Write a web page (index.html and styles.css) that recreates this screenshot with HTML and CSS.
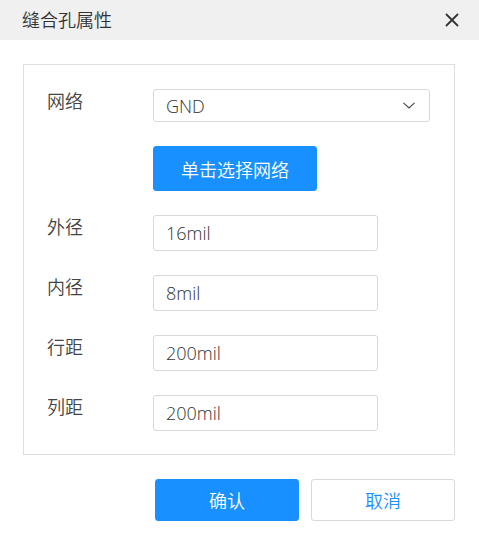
FILE: index.html
```html
<!DOCTYPE html>
<html lang="zh">
<head>
<meta charset="utf-8">
<title>缝合孔属性</title>
<link rel="stylesheet" href="styles.css">
</head>
<body>
<div class="dialog">
  <div class="header">
    <span class="title">缝合孔属性</span>
    <svg class="close" width="14" height="14" viewBox="0 0 14 14"><path d="M1 1 L13 13 M13 1 L1 13" stroke="#333" stroke-width="1.8" fill="none"/></svg>
  </div>
  <div class="body">
    <div class="panel">
      <div class="row">
        <span class="label">网络</span>
        <div class="select">
          <span>GND</span>
          <svg class="chev" width="12" height="7" viewBox="0 0 12 7"><path d="M0.5 0.8 L6 6 L11.5 0.8" stroke="#444" stroke-width="1.1" fill="none"/></svg>
        </div>
      </div>
      <div class="row">
        <span class="label"></span>
        <button class="btn primary pick">单击选择网络</button>
      </div>
      <div class="row">
        <span class="label">外径</span>
        <div class="input">16mil</div>
      </div>
      <div class="row">
        <span class="label">内径</span>
        <div class="input">8mil</div>
      </div>
      <div class="row">
        <span class="label">行距</span>
        <div class="input">200mil</div>
      </div>
      <div class="row">
        <span class="label">列距</span>
        <div class="input">200mil</div>
      </div>
    </div>
    <div class="footer">
      <button class="btn primary action">确认</button>
      <button class="btn default action">取消</button>
    </div>
  </div>
</div>
</body>
</html>
```
FILE: styles.css
```css
* { box-sizing: border-box; }
html, body { margin: 0; padding: 0; background: #fff; }
body {
  font-family: "Open Sans", "Noto Sans CJK SC", sans-serif;
  font-size: 18px;
  font-weight: 350;
  color: #333;
}
.dialog { width: 479px; }
.header {
  height: 40px;
  background: #f0f0f0;
  display: flex;
  align-items: center;
  justify-content: space-between;
  padding: 0 20px 0 22px;
}
.title { font-size: 18px; color: #333; line-height: 24px; }
.close { display: block; }
.body { padding: 24px 24px 0 23px; }
.panel {
  border: 1px solid #dfdfdf;
  padding: 24px 24px 23px 23px;
  display: flex;
  flex-direction: column;
  gap: 24px;
}
.row { display: flex; align-items: flex-start; }
.label {
  width: 106px;
  flex: none;
  color: #444;
  line-height: 26px;
  margin-top: -1px;
}
.select {
  width: 277px;
  height: 33px;
  border: 1px solid #d9d9d9;
  border-radius: 3px;
  display: flex;
  align-items: center;
  justify-content: space-between;
  padding: 0 14px 0 12px;
  color: #333;
}
.chev { display: block; }
.input {
  width: 225px;
  height: 36px;
  border: 1px solid #d9d9d9;
  border-radius: 3px;
  display: flex;
  align-items: center;
  padding: 0 12px;
  color: #333;
}
.btn {
  font-family: "Open Sans", "Noto Sans CJK SC", sans-serif;
  font-size: 18px;
  font-weight: 350;
  border-radius: 3px;
  border: 1px solid transparent;
  padding: 0;
  cursor: pointer;
}
.primary { background: #1890ff; color: #fff; border-color: #1890ff; }
.default { background: #fff; color: #1890ff; border-color: #d9d9d9; }
.pick { width: 164px; height: 45px; }
.footer {
  display: flex;
  justify-content: flex-end;
  gap: 12px;
  margin-top: 24px;
}
.action { width: 144px; height: 42px; }
```
